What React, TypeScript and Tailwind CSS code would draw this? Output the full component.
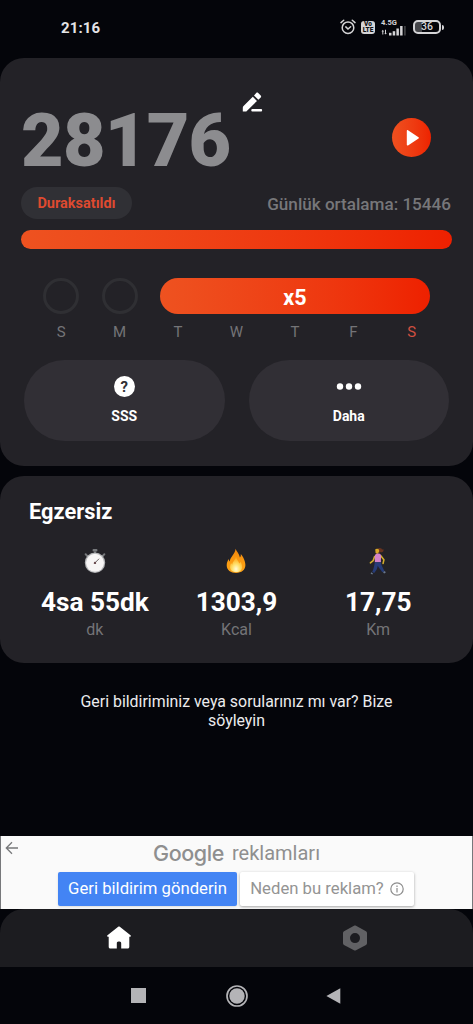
import React from "react";

interface Stat {
  icon: React.ReactNode;
  value: string;
  unit: string;
}

const StopwatchIcon = () => (
  <svg width="22" height="26" viewBox="0 0 22 26">
    <rect x="8.6" y="1" width="4.8" height="2.6" rx="0.8" fill="#77797c" />
    <rect x="10" y="3" width="2" height="3" fill="#66686b" />
    <path d="M1.6 6.2 3.2 8M20.4 6.2 18.8 8" stroke="#77797c" strokeWidth="2" strokeLinecap="round" />
    <circle cx="11" cy="14.8" r="10.2" fill="#b4b5b7" />
    <circle cx="11" cy="14.8" r="9" fill="#f7f5f5" />
    <path d="M10.6 15.2 14.8 11" stroke="#6b6264" strokeWidth="1" strokeLinecap="round" />
    <circle cx="11" cy="14.9" r="1.2" fill="#6b4c50" />
  </svg>
);

const FireIcon = () => (
  <svg width="20" height="26" viewBox="0 0 20 26">
    <defs>
      <linearGradient id="flame" x1="0" y1="0" x2="0" y2="1">
        <stop offset="0" stopColor="#f0860c" />
        <stop offset="0.6" stopColor="#fb9d12" />
        <stop offset="1" stopColor="#f9a11b" />
      </linearGradient>
      <radialGradient id="core" cx="0.5" cy="0.8" r="0.65">
        <stop offset="0" stopColor="#fffbd8" />
        <stop offset="0.5" stopColor="#ffe06a" />
        <stop offset="1" stopColor="#ffae22" />
      </radialGradient>
    </defs>
    <path
      d="M9.6.8c.5 2.2 3.9 5 4.3 8.8.9-.9 1-2.3.9-3.6 2.3 2.5 4.6 7.2 4.6 11 0 4.9-3.9 7.9-9.3 7.9S.7 22 .7 17.200c0-2.900 1.100-4.700 2-6.300.2 1.300.5 2 1.100 2.600C4.200 9 8.900 6.300 9.600.8Z"
      fill="url(#flame)"
    />
    <path
      d="M10 8.500c.2 2.800 2.400 4 3.300 6.900.5-.4.900-1 1.100-1.600 1.300 1.800 1.900 3.600 1.700 5.600-.3 3-2.800 4.700-6.100 4.700s-6-1.900-6-5c0-1.700.5-3 1.200-4.100.3.800.6 1.200 1.100 1.500.2-3.300 3.500-4.700 3.700-8Z"
      fill="url(#core)"
    />
  </svg>
);

const WalkIcon = () => (
  <svg width="18" height="28" viewBox="0 0 18 28">
    <path d="M9 1.400c2.200-1 4 .1 4.100 1.400l1-.9c.8.900.5 2.600-.7 3.200-.7.400-1.300.2-1.700-.2L10 6Z" fill="#69331f" />
    <path d="M6.200 2.500c.8-1.300 3.400-1 3.900.6.300 1.500-.4 3.200-1.900 3.800L6.600 6Z" fill="#d8a728" />
    <path
      d="M5.600 9.500 4.200 13.600 1.400 15.800M11.600 8.600l3.300 4.200-.8 3.600"
      fill="none"
      stroke="#d2ad2b"
      strokeWidth="1.600"
      strokeLinecap="round"
      strokeLinejoin="round"
    />
    <path d="M6.600 7.200c1.700-1 4.500-.8 5.200.5.700 1.600-.2 4.500.2 7.600H5.800c.4-2.900-.9-5.900.8-8.100Z" fill="#d483c8" />
    <path d="M5.800 15.200h6.100c.3 2.700 1.600 4.700 3.600 9l-2.200 1.100c-1.700-2.800-3.600-4.300-4.500-6.500-.5 3-1.600 5-3.600 7.300l-2-1.100c1.700-3.200 2-6.700 2.600-9.800Z" fill="#263c78" />
    <path d="m2.100 25.200 1.900 1.200-.6 1-1.700-.7ZM14 25.100l2-1 .7 1.700-1.700.8Z" fill="#69788f" />
  </svg>
);

const stats: Stat[] = [
  { icon: <StopwatchIcon />, value: "4sa 55dk", unit: "dk" },
  { icon: <FireIcon />, value: "1303,9", unit: "Kcal" },
  { icon: <WalkIcon />, value: "17,75", unit: "Km" },
];

const days = ["S", "M", "T", "W", "T", "F", "S"];

const StatusBar = () => (
  <div className="flex h-[58px] items-start justify-between pl-[61px] pr-[29px] pt-[18px]">
    <span className="text-[15px] font-bold leading-[20px] tracking-[0.1px] text-[#e4e4e6]">21:16</span>
    <div className="flex h-[18px] items-center text-[#d4d4d6]">
      <svg width="16" height="16" viewBox="0 0 16 16" fill="none" stroke="currentColor" strokeWidth="1.500" strokeLinecap="round">
        <circle cx="8" cy="8.700" r="5.800" />
        <path d="M1 3.600 3.700 1.300M15 3.600l-2.700-2.300M5.800 7.900 8 10l2.600-2.300" />
      </svg>
      <div className="ml-[5px] flex h-[13px] w-[14px] flex-col items-center justify-center rounded-[3px] bg-[#d4d4d6] text-[6.500px] font-black leading-[6px] text-[#101114]">
        <span>Vo</span>
        <span>LTE</span>
      </div>
      <div className="ml-[6px] flex h-[17px] w-[26px] flex-col">
        <span className="h-[7px] text-[7.500px] font-bold leading-[8px]">4.5G</span>
        <svg width="26" height="10" viewBox="0 0 26 10" fill="currentColor">
          <path d="M1.300 4.500h1v4h-1zM.5 5.500l1.300-1.700 1.300 1.700zM4 3.800h1v4H4zM3.300 7h2.500L4.600 8.600z" />
          <rect x="8" y="6.800" width="2.500" height="2.700" />
          <rect x="11.700" y="5.200" width="2.500" height="4.300" />
          <rect x="15.400" y="2.500" width="2.500" height="7" />
          <rect x="19.100" y="0" width="2.500" height="9.500" />
          <rect x="23" y="0" width="1.800" height="9.500" fill="#3c3d40" />
        </svg>
      </div>
      <div className="ml-[6px] flex h-[14px] w-[28px] items-center justify-center rounded-[5px] border-2 border-[#d4d4d6] bg-[linear-gradient(90deg,#45464a_30%,transparent_30%)] pt-px text-[10.500px] font-medium leading-none">
        36
      </div>
      <div className="ml-[1px] h-[5px] w-[2px] rounded-r-full bg-[#d4d4d6]" />
    </div>
  </div>
);

const StepsCard = () => (
  <section className="h-[408px] rounded-[24px] bg-[#232227]">
    <div className="flex h-[129px] pl-[21px] pr-[42px]">
      <span className="w-[210px] pt-[40px] text-[73.500px] font-black leading-[87px] tracking-[-0.700px] text-[#8c8c8f]">28176</span>
      <button className="ml-[8px] mt-[31px] h-[26px] w-[26px] text-white" aria-label="edit">
        <svg width="26" height="26" viewBox="0 0 26 26" fill="currentColor">
          <path d="M3.800 19.200V22.500h3.500L18 11.900l-4.200-4.200L4.300 17.200c-.4.500-.5 1.100-.5 2ZM15 6.400l4.400 4.400 2.300-2.400c.6-.6.600-1.400 0-2L19.200 3.900c-.6-.6-1.400-.6-2 0Z" />
          <rect x="12.300" y="20" width="10.800" height="2.500" rx="1" />
        </svg>
      </button>
      <button
        className="ml-auto mt-[60px] flex h-[39px] w-[39px] items-center justify-center rounded-full bg-linear-to-r from-[#ee501f] to-[#ee2200]"
        aria-label="play"
      >
        <svg width="39" height="39" viewBox="0 0 39 39" fill="#fff">
          <path d="M14.800 12.800v14c0 .7.600 1 1.200.6l10.500-7c.5-.3.500-.9 0-1.200l-10.500-7c-.6-.4-1.200-.1-1.200.6Z" />
        </svg>
      </button>
    </div>

    <div className="flex h-[32px] items-center justify-between pl-[21px] pr-[22px]">
      <span className="flex h-[32px] w-[111px] items-center justify-center rounded-full bg-[#303035] pt-px text-[14.500px] font-bold text-[#de4a30]">
        Duraksatıldı
      </span>
      <span className="pt-[3px] text-[17.100px] font-medium text-[#77777a]">Günlük ortalama: 15446</span>
    </div>

    <div className="ml-[21px] mr-[21px] mt-[11px] h-[19px] rounded-full bg-linear-to-r from-[#ee5220] to-[#ee2000]" />

    <div className="mx-[32px] mt-[29px] grid grid-cols-7">
      <div className="mx-auto h-[36px] w-[36px] rounded-full border-[3px] border-[#2f2f33]" />
      <div className="mx-auto h-[36px] w-[36px] rounded-full border-[3px] border-[#2f2f33]" />
      <div className="col-span-5 mx-[11px] flex h-[36px] items-center justify-center rounded-full bg-linear-to-r from-[#ee5220] to-[#ee2000] pt-[4px] text-[21.500px] font-bold text-white">
        x5
      </div>
      {days.map((day, i) => (
        <span
          key={i}
          className={`mt-[8px] text-center text-[15px] leading-[20px] ${
            i === days.length - 1 ? "text-[#d04f40]" : "text-[#747477]"
          }`}
        >
          {day}
        </span>
      ))}
    </div>

    <div className="mx-[24px] mt-[18px] grid grid-cols-2 gap-[24px] text-[14px] font-bold text-white">
      <button className="flex h-[81px] flex-col items-center rounded-full bg-[#312f35] pt-[16px]">
        <span className="flex h-[21px] w-[21px] items-center justify-center rounded-full bg-white pt-px text-[15px] font-bold leading-none text-[#312f35]">
          ?
        </span>
        <span className="mt-[9px] leading-[20px]">SSS</span>
      </button>
      <button className="flex h-[81px] flex-col items-center rounded-full bg-[#312f35] pt-[16px]">
        <svg width="26" height="21" viewBox="0 0 26 21" fill="#fff">
          <circle cx="4" cy="10.500" r="3.200" />
          <circle cx="13" cy="10.500" r="3.200" />
          <circle cx="22" cy="10.500" r="3.200" />
        </svg>
        <span className="mt-[9px] leading-[20px]">Daha</span>
      </button>
    </div>
  </section>
);

const ExerciseCard = () => (
  <section className="mt-[10px] h-[187px] rounded-[24px] bg-[#232227] px-[24px] pt-[23px]">
    <h2 className="pl-[5px] text-[21.800px] font-bold leading-[26px] text-white">Egzersiz</h2>
    <div className="mt-[21px] grid grid-cols-3">
      {stats.map((stat) => (
        <div key={stat.unit} className="flex flex-col items-center">
          <div className="flex h-[30px] items-center">{stat.icon}</div>
          <span className="mt-[10px] text-[26.200px] font-bold leading-[32px] text-white">{stat.value}</span>
          <span className="mt-[2px] text-[16px] leading-[20px] text-[#747477]">{stat.unit}</span>
        </div>
      ))}
    </div>
  </section>
);

const AdBanner = () => (
  <div className="flex h-[73px] border-x border-[#77787b] bg-[#fafafa] pt-px">
    <div className="w-[57px] pl-[4px] pt-[4px]">
      <svg width="14" height="14" viewBox="0 0 14 14" fill="none" stroke="#77787a" strokeWidth="1.300">
        <path d="M13 7H1.500M7 1.300 1.300 7 7 12.700" />
      </svg>
    </div>
    <div className="flex flex-col">
      <div className="flex h-[35px] items-start pl-[95px] pt-px text-[#8f8f8f]">
        <span className="w-[71px] text-[21.500px] font-medium leading-[30px] tracking-[-0.400px] [font-family:Inter,sans-serif]">
          Google
        </span>
        <span className="ml-[8px] text-[20px] leading-[30px]">reklamları</span>
      </div>
      <div className="flex gap-[3px]">
        <button className="h-[34px] w-[179px] rounded-[2px] bg-[#4384f4] text-[16.700px] text-white shadow-sm">
          Geri bildirim gönderin
        </button>
        <button className="flex h-[34px] w-[174px] items-center justify-center gap-[6px] rounded-[2px] bg-white text-[16.700px] text-[#949494] shadow-[0_1px_3px_rgba(0,0,0,0.35)]">
          Neden bu reklam?
          <svg width="14" height="14" viewBox="0 0 14 14" fill="none" stroke="#8d8d8d" strokeWidth="1.200">
            <circle cx="7" cy="7" r="6.200" />
            <path d="M7 6v4.500M7 3.400v1.500" />
          </svg>
        </button>
      </div>
    </div>
  </div>
);

const TabBar = () => (
  <nav className="grid h-[58px] grid-cols-2 rounded-t-[24px] bg-[#1c1c20]">
    <div className="flex justify-center pl-[2px] pt-[16px]">
      <svg width="26" height="26" viewBox="0 0 26 26" fill="#fff">
        <path d="M12.200 1.700 1.500 10.300c-.8.700-.4 1.500.4 1.500h.8v9.900c0 1.200.6 1.800 1.800 1.800h6.300V18.500c0-1.200.6-1.900 1.700-1.900h1c1.100 0 1.700.7 1.700 1.900v5h6.300c1.200 0 1.800-.6 1.800-1.800v-9.900h.8c.8 0 1.200-.8.400-1.500L13.800 1.700c-.5-.4-1.100-.4-1.600 0Z" />
      </svg>
    </div>
    <div className="flex justify-center pt-[16px]">
      <svg width="26" height="26" viewBox="0 0 26 26" fill="#616164">
        <path
          fillRule="evenodd"
          d="M12 .8c.6-.4 1.400-.4 2 0l10 5.500c.6.400 1 .9 1 1.600v10.400c0 .7-.4 1.200-1 1.600L14 25.300c-.6.400-1.400.4-2 0L2 19.900c-.6-.4-1-.9-1-1.600V7.900c0-.7.400-1.200 1-1.600ZM13 8.100a5 5 0 1 0 0 10 5 5 0 0 0 0-10Z"
        />
      </svg>
    </div>
  </nav>
);

const SystemNav = () => (
  <div className="flex h-[57px] items-center pl-[131px] text-[#b4b4b7]">
    <div className="h-[15px] w-[15px] bg-current" />
    <svg className="ml-[80px]" width="22" height="22" viewBox="0 0 22 22" fill="currentColor">
      <circle cx="11" cy="11" r="10" fill="none" stroke="currentColor" strokeWidth="1.700" />
      <circle cx="11" cy="11" r="7.700" />
    </svg>
    <svg className="ml-[78px]" width="15" height="16" viewBox="0 0 15 16" fill="currentColor">
      <path d="M14.300.3v15.400L.4 8Z" />
    </svg>
  </div>
);

export default function App() {
  return (
    <div className="flex h-[1024px] w-[473px] flex-col overflow-hidden bg-[#04050a] [font-family:Roboto,sans-serif]">
      <StatusBar />
      <StepsCard />
      <ExerciseCard />
      <p className="mx-auto mt-[29px] w-[340px] text-center text-[15.900px] leading-[19px] text-[#ececee]">
        Geri bildiriminiz veya sorularınız mı var? Bize söyleyin
      </p>
      <div className="mt-auto">
        <AdBanner />
        <TabBar />
        <SystemNav />
      </div>
    </div>
  );
}
